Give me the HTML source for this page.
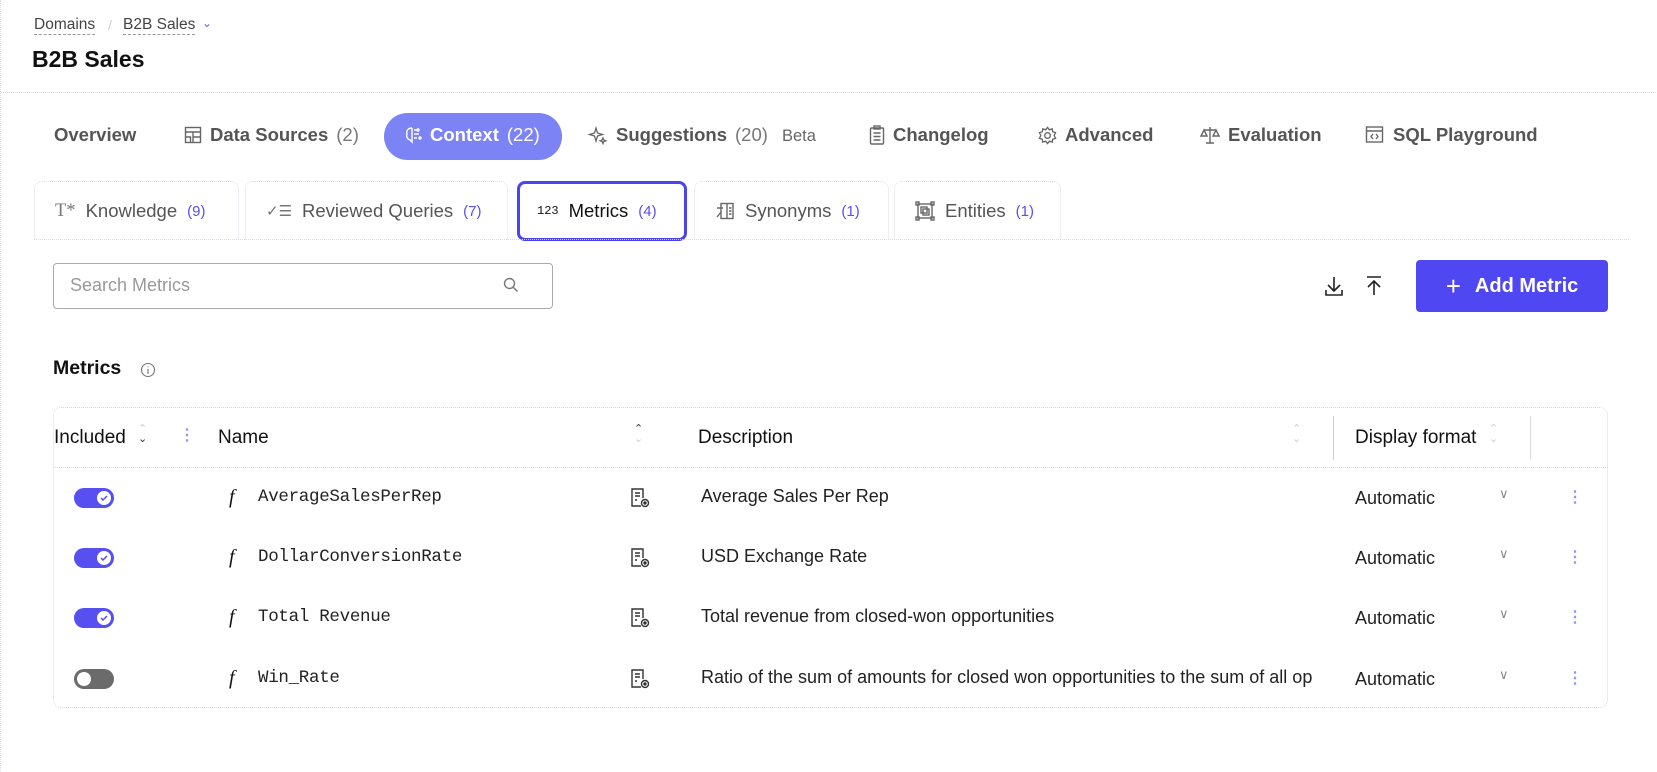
<!DOCTYPE html>
<html><head><meta charset="utf-8"><style>
*{box-sizing:border-box;margin:0;padding:0}
body{width:1657px;height:772px;background:#fff;font-family:"Liberation Sans",sans-serif;position:relative;overflow:hidden;color:#111;border-left:1px dotted #dcdcf5}
.a{position:absolute;white-space:nowrap}
.bc{font-size:15.5px;color:#444;top:16px;border-bottom:1px dashed #999;line-height:18px}
.tt{font-size:18.5px;font-weight:bold;color:#555;top:124px;display:flex;align-items:center;gap:8px}
.tt .c{font-weight:normal;color:#777}
.st{top:181px;height:59px;border:1px dotted #dcdcf0;border-bottom:none;border-radius:8px 8px 0 0;font-size:18.5px;color:#555;display:flex;align-items:center;padding-left:20px;gap:10px}
.st .c{color:#5a4ff0;font-size:15px;margin-left:0}
.row{position:absolute;left:52px;width:1555px;height:60px}
.tg{position:absolute;left:21px;top:20px;width:40px;height:20px;border-radius:10px;background:#574ff0}
.tg:after{content:"";position:absolute;right:3px;top:3px;width:14px;height:14px;border-radius:50%;background:#fff}
.tg.off{background:#6b6b6b}.tg.off:after{right:auto;left:3px}
.tg svg{position:absolute;right:6px;top:6px;z-index:2}
.f{position:absolute;left:176px;top:18px;font-family:"Liberation Serif",serif;font-style:italic;font-size:20px}
.nm{position:absolute;left:205px;top:19px;font-family:"Liberation Mono",monospace;font-size:17.5px;color:#222;letter-spacing:-0.3px}
.ds{position:absolute;left:648px;top:18px;font-size:18px;color:#222;width:612px;overflow:hidden;white-space:nowrap}
.au{position:absolute;left:1302px;top:20px;font-size:18px;color:#222}
.ch{position:absolute;left:1446px;top:18px;color:#888;font-size:13px}
.dt{position:absolute;left:1514px;top:19px;color:#9a96f0;font-size:16px;font-weight:bold}
.doc{position:absolute;left:576px;top:19px}
.hd{position:absolute;top:427px;font-size:19px}
</style></head><body>
<div class="a bc" style="left:33px">Domains</div>
<div class="a" style="left:107px;top:17px;color:#ccc;font-size:14px">/</div>
<div class="a bc" style="left:122px">B2B Sales</div>
<div class="a" style="left:201px;top:16px;color:#6a5ff0;font-size:12px">&#8964;</div>
<div class="a" style="left:31px;top:46px;font-size:23px;font-weight:bold">B2B Sales</div>
<div class="a" style="left:0;top:92px;width:1657px;border-top:1px dotted #d8d8f4"></div>

<div class="a tt" style="left:53px">Overview</div>
<div class="a tt" style="left:183px"><svg width="18" height="18" viewBox="0 0 18 18" fill="none" stroke="#666" stroke-width="1.4"><rect x="1.5" y="1.5" width="15" height="15"/><path d="M1.5 6h15M9 6v10.5M9 11h7.5M1.5 11h5v5.5"/></svg>Data Sources <span class="c">(2)</span></div>
<div class="a" style="left:383px;top:113px;width:178px;height:47px;border-radius:24px;background:#7c83f5"></div>
<div class="a tt" style="left:403px;color:#fff"><svg width="18" height="18" viewBox="0 0 18 18" fill="none" stroke="#fff" stroke-width="1.4"><path d="M8 2C4 2 2 5 3 8c-1 2 0 5 3 6l2 2V2M10 4h3M10 8h5M10 12h3"/><circle cx="14" cy="4" r="1"/><circle cx="16" cy="12" r="1"/></svg>Context <span class="c" style="color:#fff">(22)</span></div>
<div class="a tt" style="left:587px"><svg width="20" height="20" viewBox="0 0 20 20" fill="none" stroke="#666" stroke-width="1.3"><path d="M8 3l1.5 5 5 1.5-5 1.5L8 16l-1.5-5L1.5 9.5l5-1.5z"/><path d="M15 13l.8 2 2 .8-2 .8-.8 2-.8-2-2-.8 2-.8z"/></svg>Suggestions <span class="c">(20)</span></div>
<div class="a" style="left:781px;top:127px;font-size:16.5px;color:#666">Beta</div>
<div class="a tt" style="left:868px"><svg width="16" height="20" viewBox="0 0 16 20" fill="none" stroke="#666" stroke-width="1.4"><rect x="1.5" y="3" width="13" height="16" rx="1"/><rect x="5" y="1" width="6" height="3"/><path d="M4.5 8h7M4.5 11.5h7M4.5 15h7"/></svg>Changelog</div>
<div class="a tt" style="left:1037px"><svg width="19" height="19" viewBox="0 0 20 20" fill="none" stroke="#666" stroke-width="1.4"><circle cx="10" cy="10" r="3"/><path d="M10 1.5l2 2.5 3-1 .5 3 3 1-1.5 3 1.5 3-3 1-.5 3-3-1-2 2.5-2-2.5-3 1-.5-3-3-1L3 10 1.5 7l3-1 .5-3 3 1z"/></svg>Advanced</div>
<div class="a tt" style="left:1199px"><svg width="20" height="20" viewBox="0 0 20 20" fill="none" stroke="#666" stroke-width="1.4"><path d="M10 2v16M6 18h8M4 5h12M4 5l-3 6h6zM16 5l-3 6h6z"/></svg>Evaluation</div>
<div class="a tt" style="left:1364px"><svg width="20" height="20" viewBox="0 0 20 20" fill="none" stroke="#666" stroke-width="1.4"><rect x="1.5" y="2" width="16" height="15"/><path d="M1.5 6h16M8 9l-2 2.5L8 14M11 9l2 2.5L11 14"/></svg>SQL Playground</div>

<div class="a st" style="left:33px;width:205px"><span style="font-family:'Liberation Serif';color:#777">T*</span>Knowledge<span class="c">(9)</span></div>
<div class="a st" style="left:244px;width:263px"><span style="color:#777;font-size:15px">✓☰</span>Reviewed Queries<span class="c">(7)</span></div>
<div class="a st" style="left:516px;width:170px;border:3px solid #4a44f0;border-radius:8px;height:60px;top:181px;color:#111;padding-left:17px"><span style="font-size:12px;font-family:'Liberation Mono'">123</span>Metrics<span class="c">(4)</span></div>
<div class="a st" style="left:693px;width:195px"><svg width="20" height="18" viewBox="0 0 20 18" fill="none" stroke="#666" stroke-width="1.4"><rect x="6" y="1.5" width="12" height="15"/><path d="M12 1.5v15M14 6h2.5M14 9h2.5M14 12h2.5M2 6h6M6 10l-4 5"/></svg>Synonyms<span class="c">(1)</span></div>
<div class="a st" style="left:893px;width:167px"><svg width="20" height="20" viewBox="0 0 20 20" fill="none" stroke="#666" stroke-width="1.4"><rect x="3" y="3" width="14" height="14"/><rect x="6" y="6" width="6" height="6"/><rect x="8" y="8" width="6" height="6"/><rect x="1" y="1" width="3" height="3"/><rect x="16" y="1" width="3" height="3"/><rect x="1" y="16" width="3" height="3"/><rect x="16" y="16" width="3" height="3"/></svg>Entities<span class="c">(1)</span></div>
<div class="a" style="left:33px;top:239px;width:1595px;border-top:1px dotted #d8d8f4"></div>

<div class="a" style="left:52px;top:263px;width:500px;height:46px;border:1px solid #aaa;border-radius:4px"></div>
<div class="a" style="left:69px;top:275px;font-size:18px;color:#999">Search Metrics</div>
<svg class="a" style="left:502px;top:277px" width="16" height="16" viewBox="0 0 16 16" fill="none" stroke="#777" stroke-width="1.4"><circle cx="6.5" cy="6.5" r="5"/><path d="M10.5 10.5l4 4"/></svg>
<svg class="a" style="left:1322px;top:275px" width="22" height="22" viewBox="0 0 22 22" fill="none" stroke="#222" stroke-width="1.6"><path d="M11 2v14M5 10l6 6 6-6M3 15v5h16v-5"/></svg>
<svg class="a" style="left:1362px;top:275px" width="22" height="22" viewBox="0 0 22 22" fill="none" stroke="#222" stroke-width="1.6"><path d="M4 2h14M11 20V6M5 12l6-6 6 6"/></svg>
<div class="a" style="left:1415px;top:260px;width:192px;height:52px;background:#4f47f2;border-radius:4px;color:#fff;font-size:20px;font-weight:bold;display:flex;align-items:center;justify-content:center;gap:14px"><span style="font-weight:normal;font-size:26px">+</span>Add Metric</div>

<div class="a" style="left:52px;top:357px;font-size:19.5px;font-weight:bold">Metrics</div>
<svg class="a" style="left:139px;top:362px" width="16" height="16" viewBox="0 0 16 16" fill="none" stroke="#777" stroke-width="1.1"><circle cx="8" cy="8" r="6.5"/><path d="M8 7v5M8 4.5v.8"/></svg>

<div class="a" style="left:52px;top:407px;width:1555px;height:301px;border:1px dotted #d6d6f0;border-radius:8px"></div>
<div class="a" style="left:52px;top:467px;width:1555px;border-top:1px dotted #d6d6f0"></div>
<div class="hd" style="left:53px">Included</div>
<div class="a" style="left:137px;top:424px;font-size:11px;line-height:10px;color:#ccc">⌃<br><span style="color:#333">⌄</span></div>
<div class="a" style="left:178px;top:425px;color:#9a96f0;font-weight:bold">⋮</div>
<div class="hd" style="left:217px">Name</div>
<div class="a" style="left:633px;top:424px;font-size:11px;line-height:10px;color:#333">⌃<br><span style="color:#ccc">⌄</span></div>
<div class="hd" style="left:697px">Description</div>
<div class="a" style="left:1291px;top:424px;font-size:11px;line-height:10px;color:#ccc">⌃<br>⌄</div>
<div class="a" style="left:1332px;top:416px;height:44px;border-left:1px solid #c8c8f0"></div>
<div class="hd" style="left:1354px">Display format</div>
<div class="a" style="left:1488px;top:424px;font-size:11px;line-height:10px;color:#ccc">⌃<br>⌄</div>
<div class="a" style="left:1529px;top:416px;height:44px;border-left:1px solid #ddd"></div>

<div class="row" style="top:468px"><div class="tg"><svg width="8" height="8" viewBox="0 0 8 8" fill="none" stroke="#574ff0" stroke-width="1.5"><path d="M1 4l2 2 4-4"/></svg></div><div class="f">f</div><div class="nm">AverageSalesPerRep</div><svg class="doc" width="22" height="22" viewBox="0 0 22 22" fill="none" stroke="#333" stroke-width="1.4"><path d="M12 19H3V2h11v9M6 6h5M6 9h5M6 13h2"/><circle cx="16" cy="16" r="3.5"/><circle cx="16" cy="16" r="1" fill="#333"/></svg><div class="ds">Average Sales Per Rep</div><div class="au">Automatic</div><div class="ch">∨</div><div class="dt">⋮</div></div>
<div class="row" style="top:528px"><div class="tg"><svg width="8" height="8" viewBox="0 0 8 8" fill="none" stroke="#574ff0" stroke-width="1.5"><path d="M1 4l2 2 4-4"/></svg></div><div class="f">f</div><div class="nm">DollarConversionRate</div><svg class="doc" width="22" height="22" viewBox="0 0 22 22" fill="none" stroke="#333" stroke-width="1.4"><path d="M12 19H3V2h11v9M6 6h5M6 9h5M6 13h2"/><circle cx="16" cy="16" r="3.5"/><circle cx="16" cy="16" r="1" fill="#333"/></svg><div class="ds">USD Exchange Rate</div><div class="au">Automatic</div><div class="ch">∨</div><div class="dt">⋮</div></div>
<div class="row" style="top:588px"><div class="tg"><svg width="8" height="8" viewBox="0 0 8 8" fill="none" stroke="#574ff0" stroke-width="1.5"><path d="M1 4l2 2 4-4"/></svg></div><div class="f">f</div><div class="nm">Total Revenue</div><svg class="doc" width="22" height="22" viewBox="0 0 22 22" fill="none" stroke="#333" stroke-width="1.4"><path d="M12 19H3V2h11v9M6 6h5M6 9h5M6 13h2"/><circle cx="16" cy="16" r="3.5"/><circle cx="16" cy="16" r="1" fill="#333"/></svg><div class="ds">Total revenue from closed-won opportunities</div><div class="au">Automatic</div><div class="ch">∨</div><div class="dt">⋮</div></div>
<div class="row" style="top:649px"><div class="tg off"></div><div class="f">f</div><div class="nm">Win_Rate</div><svg class="doc" width="22" height="22" viewBox="0 0 22 22" fill="none" stroke="#333" stroke-width="1.4"><path d="M12 19H3V2h11v9M6 6h5M6 9h5M6 13h2"/><circle cx="16" cy="16" r="3.5"/><circle cx="16" cy="16" r="1" fill="#333"/></svg><div class="ds">Ratio of the sum of amounts for closed won opportunities to the sum of all opportunities</div><div class="au">Automatic</div><div class="ch">∨</div><div class="dt">⋮</div></div>
</body></html>
